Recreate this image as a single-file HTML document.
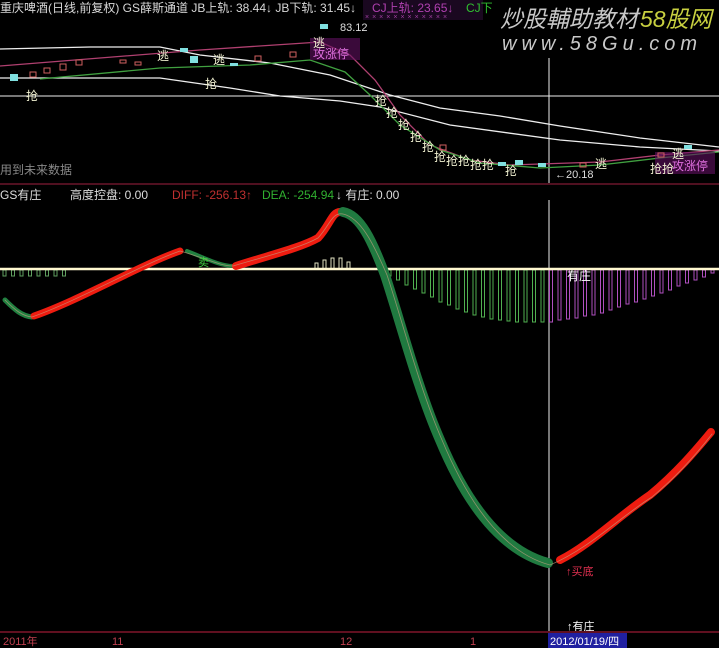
<!DOCTYPE html>
<html><head><meta charset="utf-8"><style>
html,body{margin:0;padding:0;background:#000;width:719px;height:648px;overflow:hidden}
svg{display:block}
text{font-family:"Liberation Sans","Noto Sans CJK SC",sans-serif}
</style></head><body>
<svg id="s" width="719" height="648" viewBox="0 0 719 648" xmlns="http://www.w3.org/2000/svg">
<rect width="719" height="648" fill="#000"/>
<text x="0" y="12" font-size="12" fill="#d8d8d8">重庆啤酒(日线,前复权) GS薛斯通道 JB上轨: 38.44↓ JB下轨: 31.45↓</text>
<rect x="363" y="0" width="120" height="20" fill="#1a0820"/>
<text x="372" y="12" font-size="12" fill="#b040b0">CJ上轨: 23.65↓</text>
<text x="466" y="12" font-size="12" fill="#30c030">CJ下</text>
<text x="365" y="19" font-size="7" fill="#a040a0" letter-spacing="3">××××××××××××</text>
<text x="340" y="31" font-size="11" fill="#ddd">83.12</text>
<text x="500" y="27" font-size="23" font-style="italic" fill="#c8c8c8">炒股輔助教材</text>
<text x="640" y="27" font-size="23" font-style="italic" fill="#c8d040">58股网</text>
<text x="502" y="50" font-size="20" font-style="italic" fill="#c8c8c8" letter-spacing="5">www.58Gu.com</text>
<line x1="0" y1="96" x2="719" y2="96" stroke="#eee" stroke-width="1"/>
<line x1="549" y1="58" x2="549" y2="184" stroke="#eee" stroke-width="1"/>
<line x1="549" y1="200" x2="549" y2="632" stroke="#eee" stroke-width="1"/>
<polyline fill="none" stroke="#eee" stroke-width="1.3" points="0,49 90,47 160,47 200,55 270,63 330,75 390,95 440,108 500,116 560,126 640,138 719,147"/>
<polyline fill="none" stroke="#eee" stroke-width="1.3" points="0,78 160,78 230,88 280,96 340,101 380,107 450,125 560,140 640,147 719,151"/>
<polyline fill="none" stroke="#b04070" stroke-width="1.3" points="0,66 100,58 200,50 290,44 320,42 350,55 375,80 400,115 430,145 470,160 510,165 600,162 660,155 719,150"/>
<polyline fill="none" stroke="#40a040" stroke-width="1.3" points="40,79 160,68 250,65 310,60 345,72 370,95 400,125 440,150 480,163 540,168 600,165 660,158 719,152"/>
<rect x="310" y="38" width="50" height="22" fill="#601060" opacity="0.6"/>
<rect x="655" y="152" width="60" height="22" fill="#601060" opacity="0.6"/>
<g font-size="12" fill="#f0f0d0">
<text x="26" y="100">抢</text><text x="205" y="88">抢</text><text x="213" y="64">逃</text><text x="157" y="60">逃</text>
<text x="313" y="47">逃</text><text x="375" y="105">抢</text><text x="386" y="117">抢</text><text x="398" y="129">抢</text>
<text x="410" y="141">抢</text><text x="422" y="151">抢</text><text x="434" y="161">抢</text><text x="446" y="165">抢抢</text>
<text x="470" y="169">抢抢</text><text x="505" y="175">抢</text><text x="650" y="173">抢抢</text><text x="672" y="158">逃</text>
<text x="595" y="168">逃</text>
</g>
<text x="313" y="58" font-size="12" fill="#e070e0">攻涨停</text>
<text x="672" y="170" font-size="12" fill="#e070e0">攻涨停</text>
<text x="555" y="178" font-size="11" fill="#ddd">←20.18</text>
<g fill="none" stroke="#d06060">
<rect x="30" y="72" width="6" height="5"/><rect x="44" y="68" width="6" height="5"/><rect x="60" y="64" width="6" height="6"/><rect x="76" y="60" width="6" height="5"/>
<rect x="120" y="60" width="6" height="3"/><rect x="135" y="62" width="6" height="3"/><rect x="255" y="56" width="6" height="5"/><rect x="290" y="52" width="6" height="5"/>
<rect x="440" y="145" width="6" height="5"/><rect x="580" y="163" width="6" height="4"/><rect x="658" y="153" width="6" height="4"/>
</g>
<g fill="#80e0e0">
<rect x="10" y="74" width="8" height="7"/><rect x="190" y="56" width="8" height="7"/><rect x="180" y="48" width="8" height="4"/>
<rect x="320" y="24" width="8" height="5"/><rect x="498" y="162" width="8" height="4"/><rect x="515" y="160" width="8" height="5"/>
<rect x="538" y="163" width="8" height="4"/><rect x="684" y="145" width="8" height="4"/><rect x="230" y="63" width="8" height="3"/>
</g>
<text x="0" y="174" font-size="12" fill="#888">用到未来数据</text>
<line x1="0" y1="184" x2="719" y2="184" stroke="#501020" stroke-width="2"/>
<text x="0" y="199" font-size="12" fill="#ddd">GS有庄</text>
<text x="70" y="199" font-size="12" fill="#ddd">高度控盘: 0.00</text>
<text x="172" y="199" font-size="12" fill="#c03030">DIFF: -256.13↑</text>
<text x="262" y="199" font-size="12" fill="#30b030">DEA: -254.94</text>
<text x="336" y="199" font-size="12" fill="#ddd">↓ 有庄: 0.00</text>
<g id="bars" fill="none" stroke-width="1"></g>
<line x1="0" y1="269" x2="719" y2="269" stroke="#fff8d0" stroke-width="2.5"/>
<g fill="none" stroke-linecap="round" stroke-linejoin="round">
<path d="M5,300 C15,310 22,316 32,317" stroke="#208040" stroke-width="5"/>
<path d="M34,316 C80,300 140,265 180,251" stroke="#ee1c10" stroke-width="7"/>
<path d="M187,251 C205,258 220,266 233,266" stroke="#208040" stroke-width="4"/>
<path d="M236,266 C270,255 300,248 318,238 C330,225 332,212 340,212" stroke="#ee1c10" stroke-width="8"/>
<path d="M343,212 C360,215 372,240 385,275 C400,320 418,390 440,440 C465,500 500,550 548,563" stroke="#207a40" stroke-width="10"/>
<path d="M560,560 C590,545 620,515 650,495 C680,470 700,445 711,432" stroke="#ee1c10" stroke-width="8"/>
<path d="M5,300 C15,310 22,316 32,317 C80,300 140,265 180,251 C205,258 220,266 233,266 C270,255 300,248 318,238 C330,225 332,212 343,214 C360,218 372,240 387,275 C402,320 420,390 442,440 C467,500 502,552 550,565 C590,548 620,517 652,497 C682,472 702,447 712,434" stroke="#c0a080" stroke-width="0.8" opacity="0.7"/>
</g>
<text x="566" y="575" font-size="11" fill="#e03050">↑买底</text>
<text x="567" y="630" font-size="11" fill="#fff">↑有庄</text>
<text x="567" y="280" font-size="12" fill="#fff">有庄</text>
<text x="198" y="266" font-size="11" fill="#40d040">卖</text>
<line x1="0" y1="632" x2="719" y2="632" stroke="#601020" stroke-width="2"/>
<g font-size="11" fill="#c04050">
<text x="3" y="645">2011年</text><text x="112" y="645">11</text><text x="340" y="645">12</text><text x="470" y="645">1</text>
</g>
<rect x="548" y="633" width="79" height="15" fill="#2020a0"/>
<text x="550" y="645" font-size="11" fill="#fff">2012/01/19/四</text>
</svg>
<script>
var g=document.getElementById('bars'),h='';
function b(x,y1,y2,c){h+='<rect x="'+x+'" y="'+Math.min(y1,y2)+'" width="3" height="'+Math.abs(y2-y1)+'" stroke="'+c+'"/>';}
for(var x=3;x<70;x+=8.5)b(x,270,276,'#60a060');
[315,323,331,339,347].forEach(function(x,i){b(x,[263,260,258,258,262][i],269,'#e0e0c0');});
var pts=[[380,272],[400,282],[420,292],[440,302],[460,311],[480,317],[500,320],[520,322],[548,322],[560,320],[580,317],[600,313],[620,306],[640,300],[660,293],[680,285],[700,278],[714,272]];
function d(x){for(var i=0;i<pts.length-1;i++){if(x<=pts[i+1][0]){var t=(x-pts[i][0])/(pts[i+1][0]-pts[i][0]);return pts[i][1]+t*(pts[i+1][1]-pts[i][1]);}}return 272;}
for(var x=388;x<716;x+=8.5){b(x.toFixed(1),270,Math.round(d(x)),x<548?'#50b050':'#b050c0');}
g.innerHTML=h;
</script>
</body></html>
